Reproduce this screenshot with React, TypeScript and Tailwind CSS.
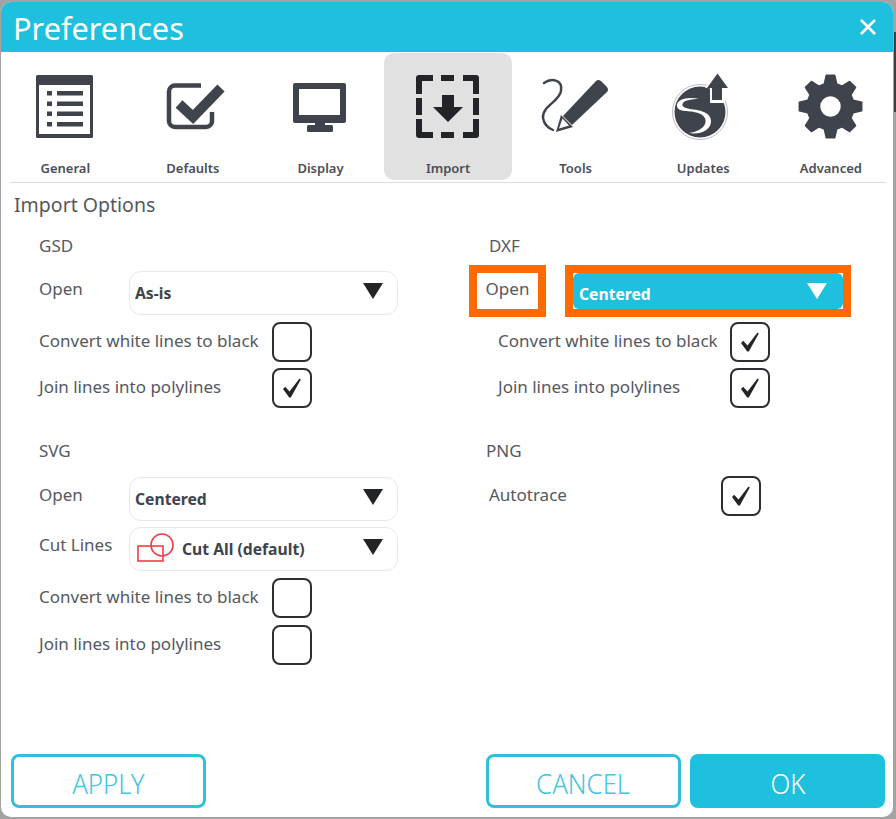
const INK = "#3f434c";

function gearPath(cx: number, cy: number, ro: number, ri: number, hole: number) {
  const pts: string[] = [];
  const n = 8;
  const step = (Math.PI * 2) / n;
  for (let i = 0; i < n; i++) {
    const a = -Math.PI / 2 + i * step;
    const seq: [number, number][] = [
      [ri, a - step * 0.34],
      [ro, a - step * 0.17],
      [ro, a + step * 0.17],
      [ri, a + step * 0.34],
    ];
    for (const [r, t] of seq) {
      pts.push(`${(cx + r * Math.cos(t)).toFixed(2)} ${(cy + r * Math.sin(t)).toFixed(2)}`);
    }
  }
  return `M${pts.join("L")}Z M${cx - hole} ${cy}a${hole} ${hole} 0 1 0 ${hole * 2} 0a${hole} ${hole} 0 1 0 ${-hole * 2} 0Z`;
}

function Svg({ children }: { children: React.ReactNode }) {
  return (
    <svg width="80" height="80" viewBox="0 0 80 80" className="block">
      {children}
    </svg>
  );
}

const GeneralIcon = () => (
  <Svg>
    <rect x="11" y="9" width="57" height="63" rx="1.5" fill={INK} />
    <rect x="14" y="19" width="51" height="49" fill="#fff" />
    {[25, 35.5, 45.5, 56].map((y) => (
      <g key={y} fill={INK}>
        <rect x="22" y={y} width="5" height="4.5" />
        <rect x="32" y={y} width="26" height="4.5" />
      </g>
    ))}
  </Svg>
);

const DefaultsIcon = () => (
  <Svg>
    <path d="M48 19.5H22a6 6 0 0 0-6 6V55a6 6 0 0 0 6 6H53a6 6 0 0 0 6-6V46" fill="none" stroke={INK} strokeWidth="4.5" />
    <path d="M26 38L40 51L68 22" fill="none" stroke={INK} strokeWidth="10" strokeLinejoin="miter" />
  </Svg>
);

const DisplayIcon = () => (
  <Svg>
    <path fillRule="evenodd" fill={INK} d="M15 17H64a2 2 0 0 1 2 2V55a2 2 0 0 1-2 2H15a2 2 0 0 1-2-2V19a2 2 0 0 1 2-2ZM19 23V49H60V23Z" />
    <rect x="35" y="57" width="10" height="3" fill={INK} />
    <rect x="27" y="59" width="26" height="7" rx="1.5" fill={INK} />
  </Svg>
);

const ImportIcon = () => (
  <Svg>
    <g fill="none" stroke="#222428" strokeWidth="6" strokeLinejoin="round">
      <path d="M25 12H11V28" />
      <path d="M55 12H68V28" />
      <path d="M25 69H11V53" />
      <path d="M55 69H68V53" />
      <path d="M33 12H46" />
      <path d="M33 69H46" />
      <path d="M11 32V49" />
      <path d="M68 32V49" />
    </g>
    <path fill="#222428" d="M34 29H46V41H55L40 56L25 41H34Z" />
  </Svg>
);

const ToolsIcon = () => (
  <Svg>
    <path d="M8 17C15 12 27 13 25 25C23 36 6 40 7 52C8 58 12 62 17 64" fill="none" stroke={INK} strokeWidth="2.4" strokeLinecap="round" />
    <path fill={INK} d="M27 50L60 15Q62 13 65 15L71 21Q73 24 71 26L36 59Z" />
    <path fill={INK} d="M20 66L25 49L37 61Z" />
    <path fill="#fff" d="M23 62.5L26.5 52.5L33 59.5Z" />
  </Svg>
);

const UpdatesIcon = () => (
  <Svg>
    <circle cx="37" cy="46" r="27.5" fill="none" stroke="#b9bbbf" strokeWidth="1" />
    <circle cx="37" cy="46" r="25.5" fill={INK} />
    <path d="M47 37V22H42L54 7L67 22H62V37Z" fill="#fff" />
    <path d="M49 34V22H44L54.5 7.5L65 22H59V34Z" fill={INK} />
    <path fill="#fff" d="M36 33C24 30 13 34 14 40C15 47 27 44 35 47C41 49 44 53 42 58C40 63 33 66 26 67C36 69 48 65 48 55C48 46 36 44 27 43C21 42 18 40 20 37C22 34 29 33 36 33Z" />
  </Svg>
);

const AdvancedIcon = () => (
  <Svg>
    <path d={gearPath(39.5, 40.5, 31.5, 23.5, 11)} fill={INK} fillRule="evenodd" stroke={INK} strokeWidth="1.5" strokeLinejoin="round" />
  </Svg>
);

function Tab({ label, icon, active }: { label: string; icon: React.ReactNode; active?: boolean }) {
  return (
    <div className={`flex h-[127px] w-[127.6px] shrink-0 flex-col items-center rounded-[10px] pt-[13px] ${active ? "bg-[#e1e1e1]" : ""}`}>
      {icon}
      <span className="mt-[13px] text-[13px] leading-[18px] font-semibold text-[#4a4e57]">{label}</span>
    </div>
  );
}

function Triangle({ white }: { white?: boolean }) {
  return (
    <svg width="20" height="16" viewBox="0 0 20 16" className="block">
      <path d="M0 0H20L10 16Z" fill={white ? "#fff" : "#222428"} />
    </svg>
  );
}

function Select({ text, icon }: { text: string; icon?: React.ReactNode }) {
  return (
    <div className="flex h-[44px] w-[269px] items-center rounded-[12px] border border-[#e8e8e8] bg-white pl-[5px] pr-[14px]">
      {icon}
      <span className="mt-[2px] flex-1 text-[15.7px] font-bold text-[#3f434c]">{text}</span>
      <span className="-mt-[4px]">
        <Triangle />
      </span>
    </div>
  );
}

function Check({ on }: { on?: boolean }) {
  return (
    <div className="flex h-[40px] w-[40px] shrink-0 items-center justify-center rounded-[8px] border-[2.5px] border-[#2c2e33] bg-white">
      {on && (
        <svg width="24" height="24" viewBox="0 0 24 24" className="block">
          <path d="M3 13L5.2 10.8L9.5 15.5L19.5 2.5L20.8 3.5L10.8 21.5H9.2Z" fill="#222428" />
        </svg>
      )}
    </div>
  );
}

function Label({ children, className = "" }: { children: React.ReactNode; className?: string }) {
  return <span className={`text-[17px] leading-[24px] text-[#55585f] ${className}`}>{children}</span>;
}

function CheckRow({ label, on, labelW, className = "" }: { label: string; on?: boolean; labelW: string; className?: string }) {
  return (
    <div className={`flex h-[40px] items-center ${className}`}>
      <span className={`${labelW} shrink-0 pb-[2px]`}>
        <Label>{label}</Label>
      </span>
      <Check on={on} />
    </div>
  );
}

function Button({ children, primary, className = "" }: { children: React.ReactNode; primary?: boolean; className?: string }) {
  return (
    <div
      className={`flex h-[54px] w-[195px] items-center justify-center rounded-[8px] pt-[3px] text-[28px] font-light ${
        primary ? "bg-[#1fc0dd] text-white" : "border-[3px] border-[#2fc0da] bg-white text-[#3ec6de]"
      } ${className}`}
    >
      <span className="inline-block scale-x-[0.92]">{children}</span>
    </div>
  );
}

export default function App() {
  return (
    <div
      className="flex h-[819px] w-[896px] overflow-hidden bg-[#a3a3a3] pl-[1px] pt-[2px]"
      style={{ fontFamily: '"Noto Sans", "Open Sans", sans-serif' }}
    >
      <div className="flex h-[815px] w-[892px] shrink-0 flex-col overflow-hidden rounded-[10px] bg-white">
        <header className="flex h-[50px] shrink-0 items-center justify-between bg-[#1fc0dd] pl-[12px] pr-[15px]">
          <h1 className="pt-[2px] text-[30.7px] leading-[50px] font-normal text-white">Preferences</h1>
          <svg width="20" height="20" viewBox="0 0 20 20" className="block">
            <path d="M3 3L17 17M17 3L3 17" stroke="#fff" strokeWidth="2.6" />
          </svg>
        </header>

        <nav className="mt-[1px] flex shrink-0 pl-[0.5px]">
          <Tab label="General" icon={<GeneralIcon />} />
          <Tab label="Defaults" icon={<DefaultsIcon />} />
          <Tab label="Display" icon={<DisplayIcon />} />
          <Tab label="Import" icon={<ImportIcon />} active />
          <Tab label="Tools" icon={<ToolsIcon />} />
          <Tab label="Updates" icon={<UpdatesIcon />} />
          <Tab label="Advanced" icon={<AdvancedIcon />} />
        </nav>

        <div className="ml-[9px] mr-[7px] mt-[2px] h-[1px] shrink-0 bg-[#dcdcdc]" />

        <div className="pl-[13px] pt-[9px] text-[19.5px] leading-[26px] text-[#55585f]">Import Options</div>

        <div className="mt-[16px] flex flex-1">
          <div className="w-[448px] shrink-0 pl-[38px]">
            <div className="h-[24px]">
              <Label>GSD</Label>
            </div>
            <div className="mt-[13px] flex h-[44px]">
              <span className="w-[90px] pt-[6px]">
                <Label>Open</Label>
              </span>
              <Select text="As-is" />
            </div>
            <CheckRow className="mt-[7px]" label="Convert white lines to black" labelW="w-[233px]" />
            <CheckRow className="mt-[6px]" label="Join lines into polylines" labelW="w-[233px]" on />

            <div className="mt-[31px] h-[24px]">
              <Label>SVG</Label>
            </div>
            <div className="mt-[14px] flex h-[44px]">
              <span className="w-[90px] pt-[6px]">
                <Label>Open</Label>
              </span>
              <Select text="Centered" />
            </div>
            <div className="mt-[6px] flex h-[44px]">
              <span className="w-[90px] pt-[6px]">
                <Label>Cut Lines</Label>
              </span>
              <Select
                text="Cut All (default)"
                icon={
                  <svg width="41" height="34" viewBox="0 0 41 34" className="mr-[6px] block">
                    <rect x="3" y="14" width="25" height="15" fill="none" stroke="#ee3f48" strokeWidth="1.6" />
                    <circle cx="27" cy="13" r="11" fill="none" stroke="#ee3f48" strokeWidth="1.6" />
                  </svg>
                }
              />
            </div>
            <CheckRow className="mt-[7px]" label="Convert white lines to black" labelW="w-[233px]" />
            <CheckRow className="mt-[7px]" label="Join lines into polylines" labelW="w-[233px]" />
          </div>

          <div className="flex-1 pl-[20px]">
            <div className="h-[24px] pl-[20px]">
              <Label>DXF</Label>
            </div>
            <div className="mt-[7px] flex h-[52px] gap-[19px]">
              <div className="flex h-[52px] w-[77px] justify-center border-[8px] border-[#ff6a00] bg-white">
                <Label className="mt-[4px]">Open</Label>
              </div>
              <div className="h-[52px] w-[286px] border-[8px] border-[#ff6a00] bg-white">
                <div className="flex h-[36px] items-center rounded-[6px] bg-[#1fc0dd] pl-[6px] pr-[16px]">
                  <span className="mt-[7px] flex-1 text-[15.7px] font-bold text-white">Centered</span>
                  <Triangle white />
                </div>
              </div>
            </div>
            <CheckRow className="mt-[5px] pl-[29px]" label="Convert white lines to black" labelW="w-[232px]" on />
            <CheckRow className="mt-[6px] pl-[29px]" label="Join lines into polylines" labelW="w-[232px]" on />

            <div className="mt-[31px] h-[24px] pl-[17px]">
              <Label>PNG</Label>
            </div>
            <CheckRow className="mt-[13px] pl-[20px]" label="Autotrace" labelW="w-[232px]" on />
          </div>
        </div>

        <footer className="flex shrink-0 items-center pb-[9px] pl-[10px]">
          <Button>APPLY</Button>
          <Button className="ml-[280px]">CANCEL</Button>
          <Button primary className="ml-[9px]">OK</Button>
        </footer>
      </div>
      <div className="h-full flex-1 pl-[1px] pt-[30px]">
        <div className="h-[80px] bg-[#3c4042]" />
      </div>
    </div>
  );
}
